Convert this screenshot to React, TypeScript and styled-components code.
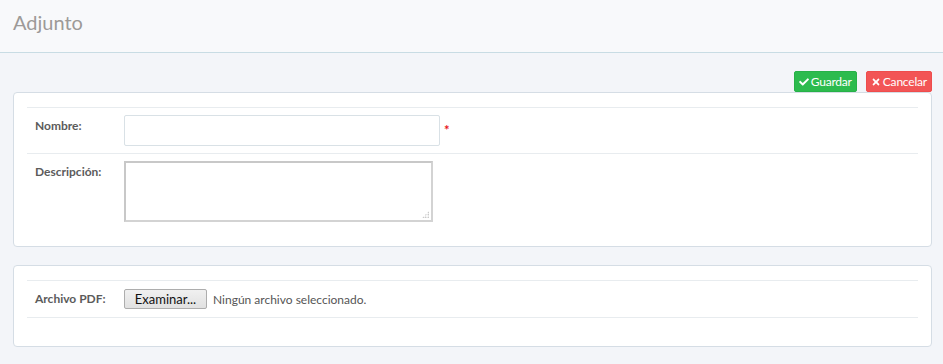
import React from "react";
import styled, { createGlobalStyle } from "styled-components";
import { FaCheck, FaTimes } from "react-icons/fa";

const Global = createGlobalStyle`
  html, body { margin: 0; padding: 0; }
  body {
    background: #f3f5f9;
    font-family: Lato, "Open Sans", "Liberation Sans", sans-serif;
    color: #555;
  }
  * { box-sizing: border-box; }
`;

const Page = styled.div`
  min-height: 364px;
  background: #f3f5f9;
`;

const Header = styled.header`
  height: 53px;
  background: #f8f9fb;
  border-bottom: 1px solid #c8dce4;
  padding: 10px 13px 0;
`;

const Title = styled.h1`
  margin: 0;
  font-size: 20px;
  font-weight: 400;
  color: #9d9a98;
  line-height: 24px;
`;

const Content = styled.main`
  padding: 18px 11px 18px 13px;
  display: flex;
  flex-direction: column;
`;

const Actions = styled.div`
  display: flex;
  justify-content: flex-end;
  gap: 9px;
`;

const Button = styled.button<{ $variant: "success" | "danger" }>`
  display: inline-flex;
  align-items: center;
  gap: 2px;
  height: 21px;
  padding: 0 4px;
  border: 1px solid ${(p) => (p.$variant === "success" ? "#27b148" : "#ee4d4d")};
  border-radius: 2px;
  background: ${(p) => (p.$variant === "success" ? "#2cbb4e" : "#f25556")};
  color: #fff;
  font-family: inherit;
  font-size: 12px;
  letter-spacing: -0.2px;
  line-height: 1;
  cursor: pointer;
  svg { width: 10px; height: 10px; }
`;

const Panel = styled.section<{ $bottom: number; $top?: number }>`
  background: #fff;
  border: 1px solid #d5dde5;
  border-radius: 4px;
  padding: 14px 13px ${(p) => p.$bottom}px;
  margin-top: ${(p) => p.$top ?? 0}px;
`;

const Row = styled.div<{ $last?: boolean }>`
  display: grid;
  grid-template-columns: 97px auto 1fr;
  align-items: start;
  padding: 7px 0 ${(p) => (p.$last ? 8 : 7)}px 0;
  border-top: 1px solid #e8ecef;
  border-bottom: ${(p) => (p.$last ? "1px solid #e8ecef" : "0")};
`;

const Label = styled.label`
  padding-left: 8px;
  padding-top: 3px;
  font-size: 12px;
  font-weight: 700;
  color: #5b5b5b;
`;

const TextInput = styled.input`
  width: 316px;
  height: 31px;
  border: 1px solid #d9e1e6;
  border-radius: 2px;
  background: #fff;
  outline: none;
`;

const Required = styled.span`
  color: #e8141a;
  font-size: 13px;
  font-weight: 700;
  padding: 7px 0 0 4px;
`;

const TextArea = styled.textarea`
  width: 309px;
  height: 61px;
  border: 2px solid #d3d3d3;
  border-top-color: #c8c8c8;
  border-left-color: #c8c8c8;
  background-color: #fff;
  resize: none;
  outline: none;
  margin: 0;
`;

const Grip = styled.span`
  position: absolute;
  right: 4px;
  bottom: 4px;
  width: 7px;
  height: 7px;
  background-image: radial-gradient(circle, #aaa 0.7px, transparent 0.9px);
  background-size: 2.5px 2.5px;
  clip-path: polygon(100% 0, 100% 100%, 0 100%);
`;

const AreaWrap = styled.div`
  position: relative;
  width: 309px;
  height: 61px;
`;

const FileField = styled.div`
  display: flex;
  align-items: center;
  gap: 6px;
  grid-column: 2 / 4;
  padding-top: 1px;
`;

const FileButton = styled.button`
  width: 83px;
  height: 20px;
  padding: 0;
  border: 1px solid #adadad;
  border-radius: 2px;
  background: linear-gradient(#f0f0f0, #e1e1e1);
  color: #111;
  font-family: inherit;
  font-size: 13px;
  line-height: 18px;
`;

const FileName = styled.span`
  font-size: 12px;
  color: #555;
`;

export default function App() {
  return (
    <Page>
      <Global />
      <Header>
        <Title>Adjunto</Title>
      </Header>
      <Content>
        <Actions>
          <Button $variant="success"><FaCheck />Guardar</Button>
          <Button $variant="danger"><FaTimes />Cancelar</Button>
        </Actions>
        <Panel $bottom={17}>
          <Row>
            <Label>Nombre:</Label>
            <TextInput type="text" />
            <Required>*</Required>
          </Row>
          <Row>
            <Label>Descripción:</Label>
            <AreaWrap>
              <TextArea />
              <Grip />
            </AreaWrap>
          </Row>
        </Panel>
        <Panel $bottom={28} $top={18}>
          <Row $last>
            <Label>Archivo PDF:</Label>
            <FileField>
              <FileButton type="button">Examinar...</FileButton>
              <FileName>Ningún archivo seleccionado.</FileName>
            </FileField>
          </Row>
        </Panel>
      </Content>
    </Page>
  );
}
